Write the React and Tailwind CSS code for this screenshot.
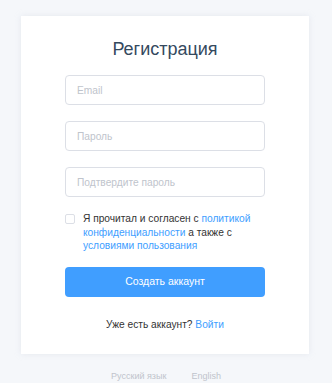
import React, { useState } from "react";

const Register = () => {
  const [agree, setAgree] = useState(false);

  return (
    <div className="min-h-screen w-[332px] h-[383px] bg-[#f5f7fa] font-['Liberation_Sans',Arial,sans-serif] pt-4 overflow-hidden">
      <div className="ml-[21px] w-[288px] bg-white shadow-[0_0_6px_rgba(200,205,220,0.35)] px-[44px] pt-[21px] pb-[22px]">
        <h2 className="text-center text-[18px] leading-[24px] text-[#34495e]">
          Регистрация
        </h2>

        <div className="mt-[14px] flex flex-col gap-4">
          <input
            type="text"
            placeholder="Email"
            className="h-[30px] w-full rounded border border-[#dcdfe6] px-[11px] text-[10.2px] text-[#606266] placeholder:text-[#c0c4cc] focus:outline-none"
          />
          <input
            type="password"
            placeholder="Пароль"
            className="h-[30px] w-full rounded border border-[#dcdfe6] px-[11px] text-[10.2px] text-[#606266] placeholder:text-[#c0c4cc] focus:outline-none"
          />
          <input
            type="password"
            placeholder="Подтвердите пароль"
            className="h-[30px] w-full rounded border border-[#dcdfe6] px-[11px] text-[10.2px] text-[#606266] placeholder:text-[#c0c4cc] focus:outline-none"
          />
        </div>

        <label className="mt-[15px] flex items-start gap-[8px] cursor-pointer">
          <input
            type="checkbox"
            checked={agree}
            onChange={(e) => setAgree(e.target.checked)}
            className="sr-only"
          />
          <span className="mt-[2px] h-[10px] w-[10px] shrink-0 rounded-[2px] border border-[#dcdfe6] bg-white" />
          <span className="text-[10.2px] leading-[13.5px] text-[#333]">
            Я прочитал и согласен с{" "}
            <a className="text-[#409eff]">политикой конфиденциальности</a> а
            также с <a className="text-[#409eff]">условиями пользования</a>
          </span>
        </label>

        <button
          type="submit"
          className="mt-[14px] h-[30px] w-full rounded bg-[#409eff] text-[10.5px] text-white"
        >
          Создать аккаунт
        </button>

        <p className="mt-[21px] text-center text-[10.2px] leading-[14px] text-[#333]">
          Уже есть аккаунт? <a className="text-[#409eff]">Войти</a>
        </p>
      </div>

      <div className="mt-[16px] flex justify-center gap-[25px] text-[9px] leading-[12px] text-[#c0c4cc]">
        <span>Русский язык</span>
        <span>English</span>
      </div>
    </div>
  );
};

export default function App() {
  return <Register />;
}
